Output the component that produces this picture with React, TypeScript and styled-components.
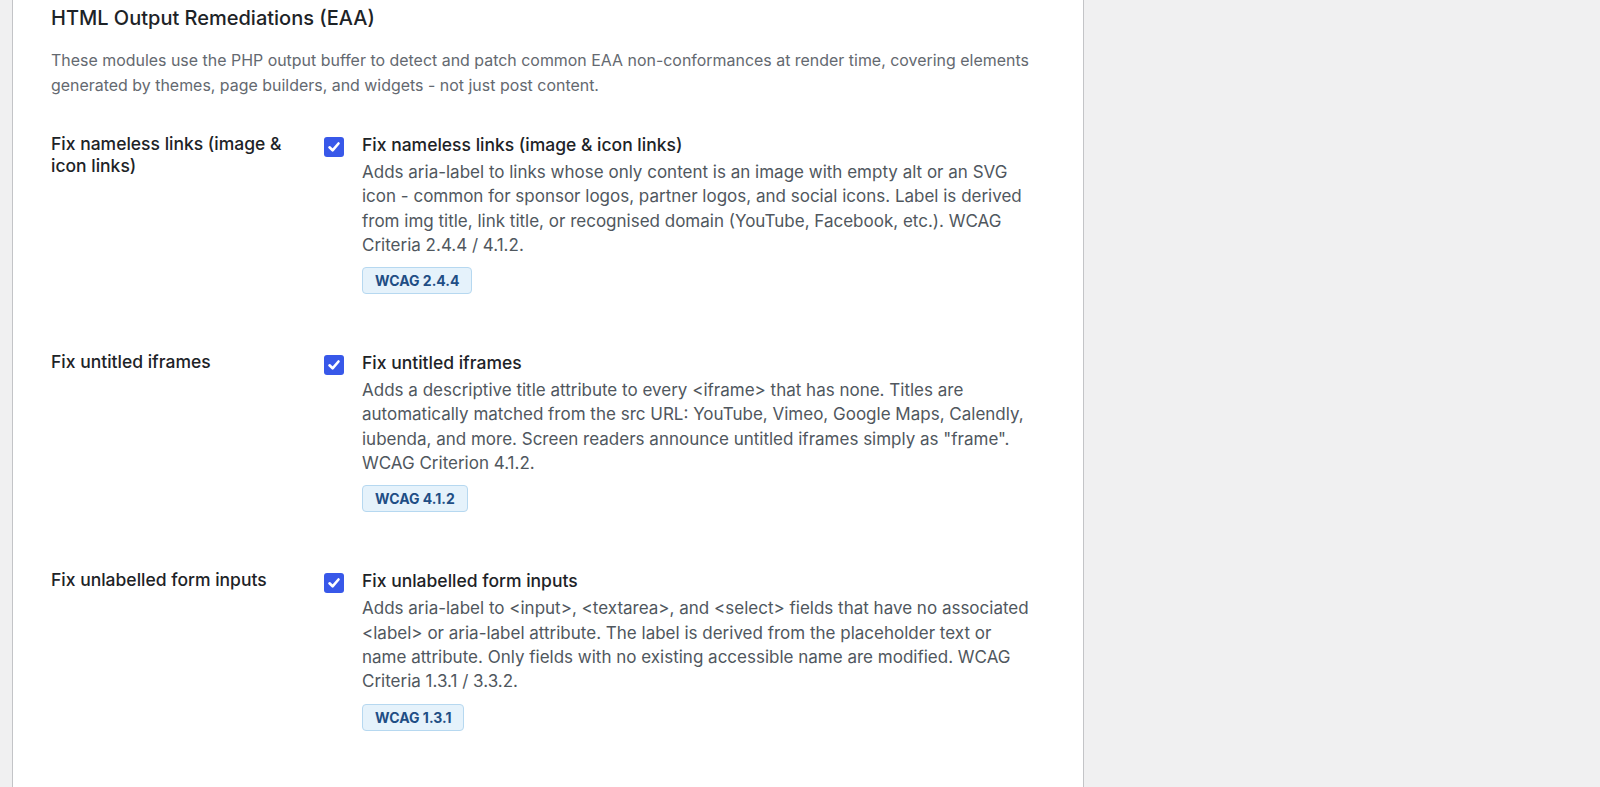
import React from 'react';
import styled, { createGlobalStyle } from 'styled-components';

const GlobalStyle = createGlobalStyle`
  html, body {
    margin: 0;
    padding: 0;
    background: #f0f0f1;
  }
  body {
    font-family: Inter, "Noto Sans", sans-serif;
    -webkit-font-smoothing: antialiased;
  }
`;

type Option = {
  label: string[];
  title: string;
  desc: string[];
  badge: string;
};

const options: Option[] = [
  {
    label: ['Fix nameless links (image &', 'icon links)'],
    title: 'Fix nameless links (image & icon links)',
    desc: [
      'Adds aria-label to links whose only content is an image with empty alt or an SVG',
      'icon - common for sponsor logos, partner logos, and social icons. Label is derived',
      'from img title, link title, or recognised domain (YouTube, Facebook, etc.). WCAG',
      'Criteria 2.4.4 / 4.1.2.',
    ],
    badge: 'WCAG 2.4.4',
  },
  {
    label: ['Fix untitled iframes'],
    title: 'Fix untitled iframes',
    desc: [
      'Adds a descriptive title attribute to every <iframe> that has none. Titles are',
      'automatically matched from the src URL: YouTube, Vimeo, Google Maps, Calendly,',
      'iubenda, and more. Screen readers announce untitled iframes simply as "frame".',
      'WCAG Criterion 4.1.2.',
    ],
    badge: 'WCAG 4.1.2',
  },
  {
    label: ['Fix unlabelled form inputs'],
    title: 'Fix unlabelled form inputs',
    desc: [
      'Adds aria-label to <input>, <textarea>, and <select> fields that have no associated',
      '<label> or aria-label attribute. The label is derived from the placeholder text or',
      'name attribute. Only fields with no existing accessible name are modified. WCAG',
      'Criteria 1.3.1 / 3.3.2.',
    ],
    badge: 'WCAG 1.3.1',
  },
];

const CheckIcon = () => (
  <svg width="14" height="14" viewBox="0 0 14 14" fill="none">
    <path d="M2.5 7.3 L5.6 10.3 L11.5 3.5" stroke="#fff" strokeWidth="2.6" strokeLinecap="round" strokeLinejoin="round" />
  </svg>
);

export default function App() {
  return (
    <Page>
      <GlobalStyle />
      <Panel>
        <SectionTitle>HTML Output Remediations (EAA)</SectionTitle>
        <Intro>
          These modules use the PHP output buffer to detect and patch common EAA non-conformances at render time, covering elements
          <br />
          generated by themes, page builders, and widgets - not just post content.
        </Intro>
        <Rows>
          {options.map((o, i) => (
            <Row key={i}>
              <RowLabel>
                {o.label.map((l, j) => (
                  <Line key={j}>{l}</Line>
                ))}
              </RowLabel>
              <Checkbox>
                <CheckIcon />
              </Checkbox>
              <Body>
                <OptionTitle>{o.title}</OptionTitle>
                <Desc>
                  {o.desc.map((l, j) => (
                    <Line key={j}>{l}</Line>
                  ))}
                </Desc>
                <Badge>{o.badge}</Badge>
              </Body>
            </Row>
          ))}
        </Rows>
      </Panel>
    </Page>
  );
}

const Page = styled.div`
  height: 787px;
  overflow: hidden;
  padding-left: 12px;
  background: #f0f0f1;
`;

const Panel = styled.div`
  box-sizing: border-box;
  width: 1072px;
  min-height: 100%;
  background: #fff;
  border-left: 1px solid #c3c4c7;
  border-right: 1px solid #c3c4c7;
  padding: 4px 42px 0 38px;
`;

const SectionTitle = styled.h2`
  margin: 0;
  font-size: 20px;
  font-weight: 500;
  line-height: 28px;
  color: #1d2327;
`;

const Intro = styled.p`
  margin: 17px 0 0;
  font-size: 15.95px;
  line-height: 24.5px;
  color: #646970;
  white-space: nowrap;
`;

const Rows = styled.div`
  margin-top: 35px;
  display: flex;
  flex-direction: column;
`;

const Row = styled.div`
  display: grid;
  grid-template-columns: 273px 20px 1fr;
  padding-bottom: 57px;
`;

const RowLabel = styled.div`
  font-size: 17.5px;
  font-weight: 500;
  line-height: 22px;
  color: #1d2327;
`;

const Line = styled.span`
  display: block;
  white-space: nowrap;
`;

const Checkbox = styled.div`
  width: 20px;
  height: 20px;
  margin-top: 4px;
  border-radius: 3px;
  background: #3858e9;
  display: flex;
  align-items: center;
  justify-content: center;
`;

const Body = styled.div`
  padding-left: 18px;
  display: flex;
  flex-direction: column;
  align-items: flex-start;
`;

const OptionTitle = styled.div`
  font-size: 17.5px;
  font-weight: 500;
  line-height: 24px;
  color: #1d2327;
`;

const Desc = styled.div`
  margin-top: 3px;
  font-size: 17px;
  line-height: 24.3px;
  color: #50575e;
`;

const Badge = styled.span`
  margin-top: 10px;
  box-sizing: border-box;
  height: 27px;
  padding: 0 12px;
  border: 1px solid #b6d8f0;
  border-radius: 4px;
  background: #e5f2fb;
  color: #1f4e85;
  font-size: 14px;
  font-weight: 700;
  line-height: 25px;
`;
